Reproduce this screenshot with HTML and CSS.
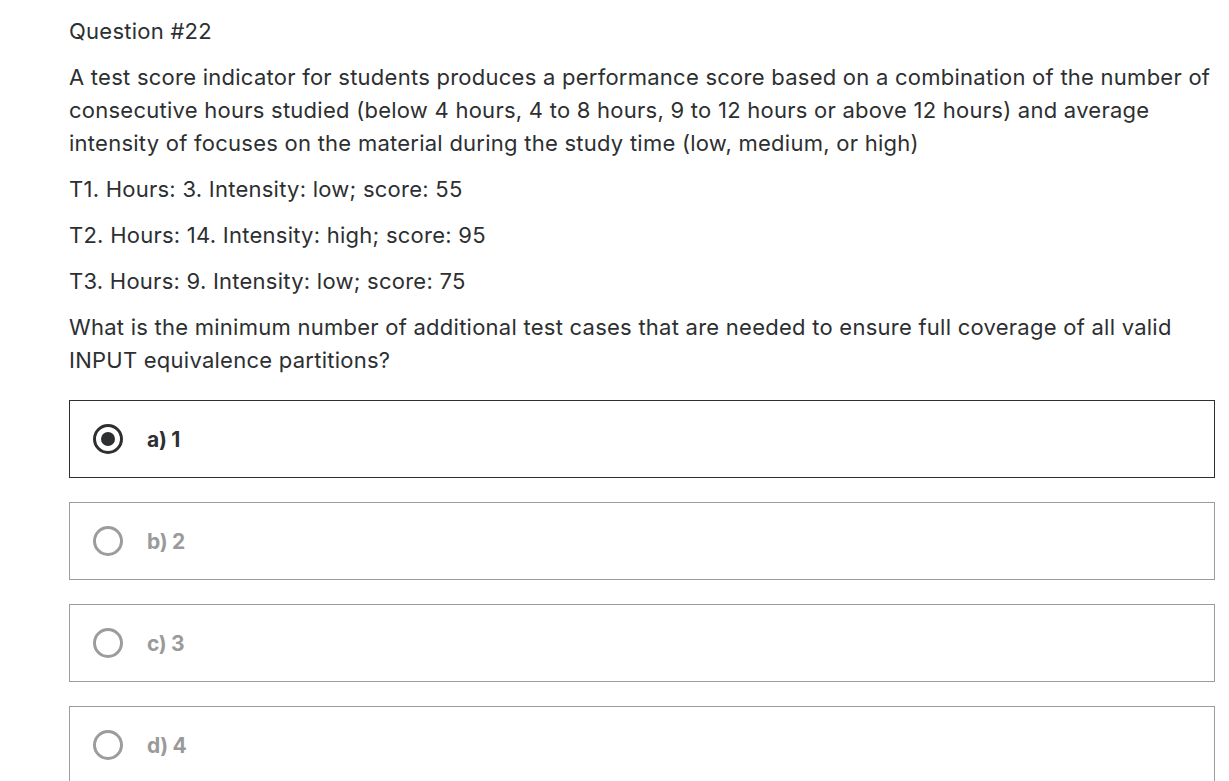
FILE: index.html
```html
<!DOCTYPE html>
<html>
<head>
<meta charset="utf-8">
<link rel="stylesheet" href="styles.css">
</head>
<body>
<main class="quiz">
  <div class="q-title">Question #22</div>
  <div class="q-body">
    <p>A test score indicator for students produces a performance score based on a combination of the number of consecutive hours studied (below 4 hours, 4 to 8 hours, 9 to 12 hours or above 12 hours) and average intensity of focuses on the material during the study time (low, medium, or high)</p>
    <p>T1. Hours: 3. Intensity: low; score: 55</p>
    <p>T2. Hours: 14. Intensity: high; score: 95</p>
    <p>T3. Hours: 9. Intensity: low; score: 75</p>
    <p>What is the minimum number of additional test cases that are needed to ensure full coverage of all valid INPUT equivalence partitions?</p>
  </div>
  <ul class="options">
    <li class="option selected"><span class="radio"></span><span class="label">a) 1</span></li>
    <li class="option"><span class="radio"></span><span class="label">b) 2</span></li>
    <li class="option"><span class="radio"></span><span class="label">c) 3</span></li>
    <li class="option"><span class="radio"></span><span class="label">d) 4</span></li>
  </ul>
</main>
</body>
</html>
```
FILE: styles.css
```css
html, body {
  margin: 0;
  padding: 0;
  background: #ffffff;
}
body {
  font-family: Inter, "Liberation Sans", sans-serif;
  color: #2d2f31;
  font-size: 22px;
  line-height: 33px;
  letter-spacing: 0.25px;
}
.quiz {
  margin-left: 69px;
  width: 1146px;
  padding-top: 15px;
}
.q-title {
  margin-bottom: 13px;
}
.q-body p {
  margin: 0 0 13px 0;
}
.options {
  list-style: none;
  margin: 23px 0 0 0;
  padding: 0;
  display: flex;
  flex-direction: column;
  gap: 24px;
}
.option {
  height: 76px;
  border: 1px solid #9c9c9c;
  display: flex;
  align-items: center;
  padding-left: 23px;
  color: #9a9a9a;
}
.option.selected {
  border-color: #2d2f31;
  color: #2d2f31;
}
.radio {
  box-sizing: border-box;
  width: 30px;
  height: 30px;
  border-radius: 50%;
  border: 3px solid #9c9c9c;
  margin-right: 24px;
  display: flex;
  align-items: center;
  justify-content: center;
}
.selected .radio {
  border-color: #2d2f31;
}
.selected .radio::after {
  content: "";
  width: 14px;
  height: 14px;
  border-radius: 50%;
  background: #2d2f31;
}
.label {
  font-weight: 700;
  font-size: 21px;
  letter-spacing: -0.3px;
}
```
